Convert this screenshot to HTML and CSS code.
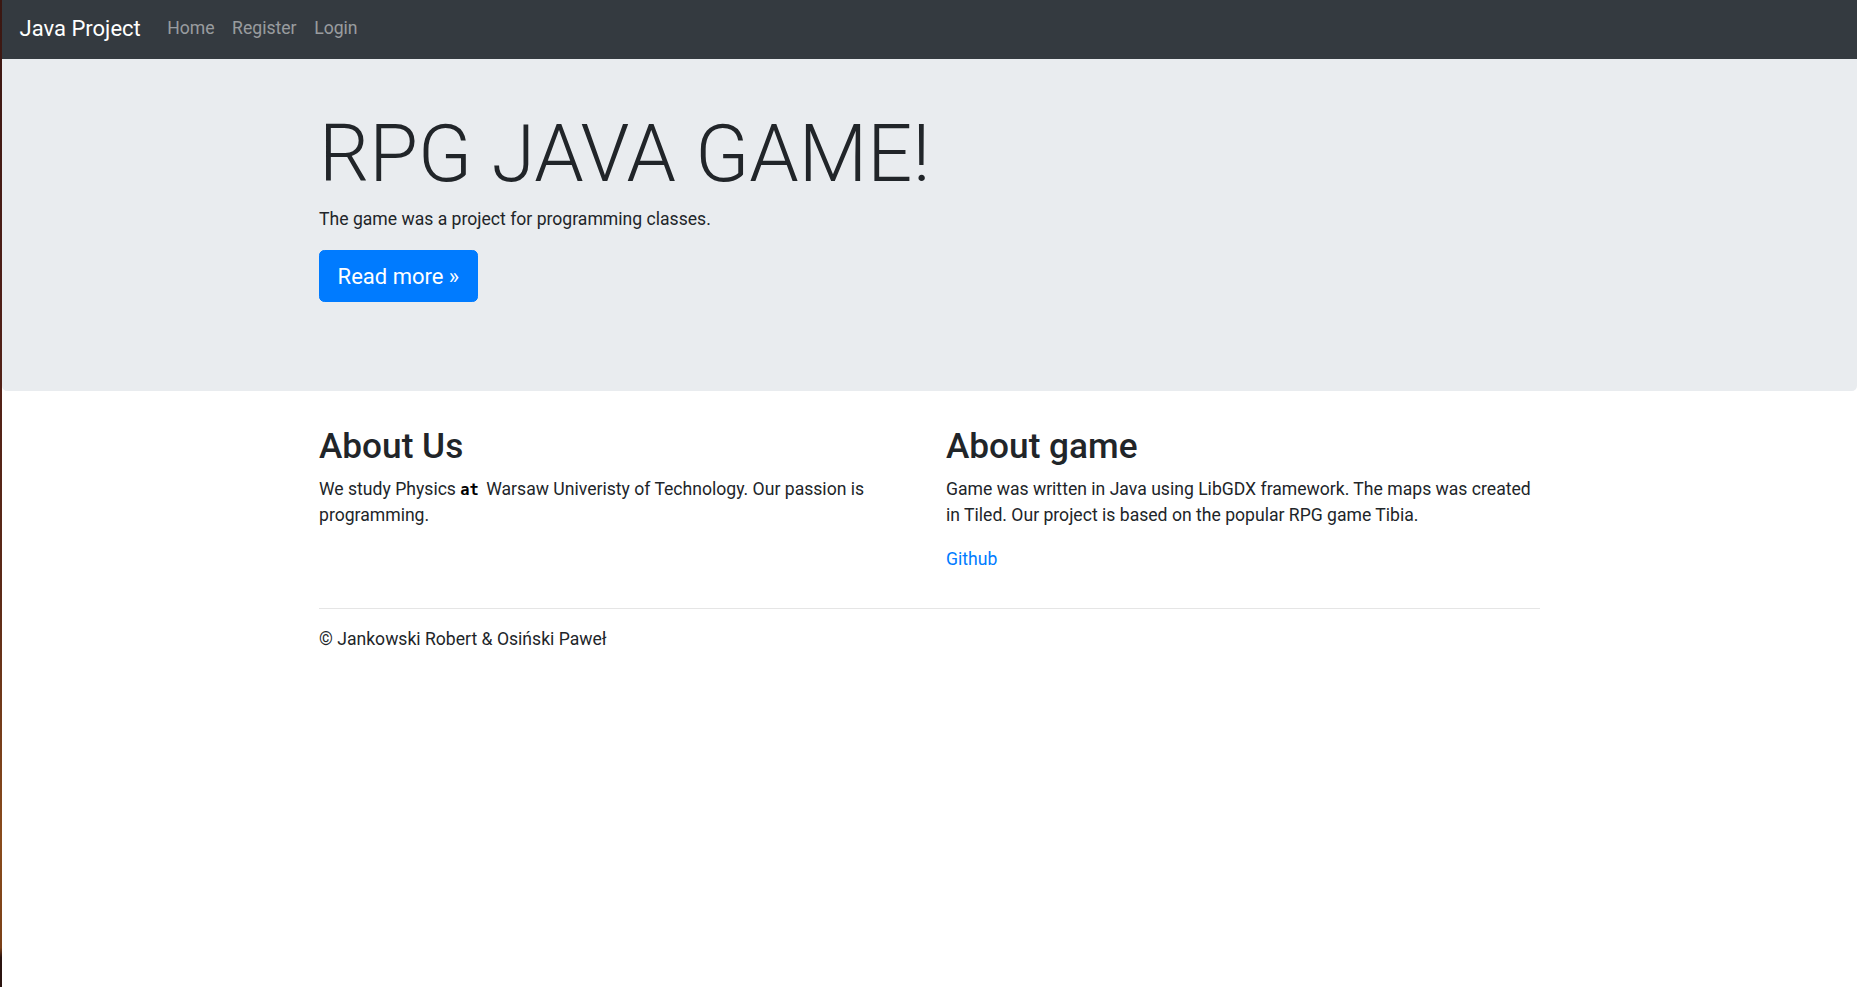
FILE: index.html
```html
<!DOCTYPE html>
<html lang="en">
<head>
<meta charset="utf-8">
<title>Java Project</title>
<link rel="stylesheet" href="styles.css">
</head>
<body>
<div class="desk-edge"></div>
<div class="page">
  <nav class="navbar">
    <a class="brand" href="#">Java Project</a>
    <ul class="nav">
      <li><a class="nav-link" href="#">Home</a></li>
      <li><a class="nav-link" href="#">Register</a></li>
      <li><a class="nav-link" href="#">Login</a></li>
    </ul>
  </nav>
  <main>
    <div class="jumbotron">
      <div class="container">
        <h1 class="display">RPG JAVA GAME!</h1>
        <p>The game was a project for programming classes.</p>
        <p><a class="btn" href="#">Read more &raquo;</a></p>
      </div>
    </div>
    <div class="container">
      <div class="row">
        <div class="col">
          <h2>About Us</h2>
          <p>We study Physics <b class="at">at</b> Warsaw Univeristy of Technology. Our passion is programming.</p>
        </div>
        <div class="col">
          <h2>About game</h2>
          <p>Game was written in Java using LibGDX framework. The maps was created in Tiled. Our project is based on the popular RPG game Tibia.</p>
          <p><a class="link" href="#">Github</a></p>
        </div>
      </div>
      <hr>
    </div>
  </main>
  <footer class="container">
    <p>&copy; Jankowski Robert &amp; Osiński Paweł</p>
  </footer>
</div>
</body>
</html>
```
FILE: styles.css
```css
html, body {
  height: 100%;
}
body {
  margin: 0;
  display: flex;
  font-family: Roboto, "Liberation Sans", sans-serif;
  font-size: 17.6px;
  line-height: 1.5;
  color: #212529;
  background: #fff;
}
.desk-edge {
  width: 2px;
  flex: none;
  background: linear-gradient(to bottom, #3a1712 0%, #4e1e17 30%, #5c2a18 60%, #8a4c1c 85%, #7a4018 96%, #2b1410 97%, #2b1410 100%);
}
.page {
  flex: 1;
  min-width: 0;
}
a {
  text-decoration: none;
}
.navbar {
  height: 59px;
  box-sizing: border-box;
  background: #343a40;
  display: flex;
  align-items: center;
  padding: 0 17.6px 2px;
}
.brand {
  color: #fff;
  font-size: 22px;
  line-height: 33px;
  margin-right: 17.6px;
}
.nav {
  list-style: none;
  margin: 0;
  padding: 0;
  display: flex;
}
.nav-link {
  display: block;
  padding: 0 8.8px;
  color: rgba(255, 255, 255, 0.5);
  line-height: 26.4px;
}
.jumbotron {
  background: #e9ecef;
  border-radius: 0 0 5.3px 5.3px;
  padding: 48.4px 0 71.4px;
  margin-bottom: 33.4px;
}
.container {
  max-width: 1254px;
  box-sizing: border-box;
  padding: 0 16.5px;
  margin: 0 auto;
}
.display {
  font-size: 79.2px;
  font-weight: 300;
  line-height: 1.2;
  margin: 0 0 3.4px;
}
p {
  margin: 0 0 17.6px;
}
.btn {
  display: inline-block;
  background: #007bff;
  border: 1px solid #007bff;
  color: #fff;
  font-size: 22px;
  line-height: 33px;
  padding: 8.8px 17.6px;
  border-radius: 5.3px;
}
.row {
  display: flex;
  margin: 0 -16.5px;
}
.col {
  flex: 0 0 50%;
  box-sizing: border-box;
  padding: 0 16.5px;
}
h2 {
  font-size: 35.2px;
  font-weight: 500;
  line-height: 1.2;
  margin: 0 0 8.8px;
}
.at {
  font-family: "DejaVu Sans Mono", monospace;
  font-weight: bold;
  font-size: 15.4px;
  color: #000;
  margin-right: 3px;
}
.link {
  color: #007bff;
}
hr {
  border: 0;
  border-top: 1px solid rgba(0, 0, 0, 0.1);
  margin: 17.6px 0;
}
```
